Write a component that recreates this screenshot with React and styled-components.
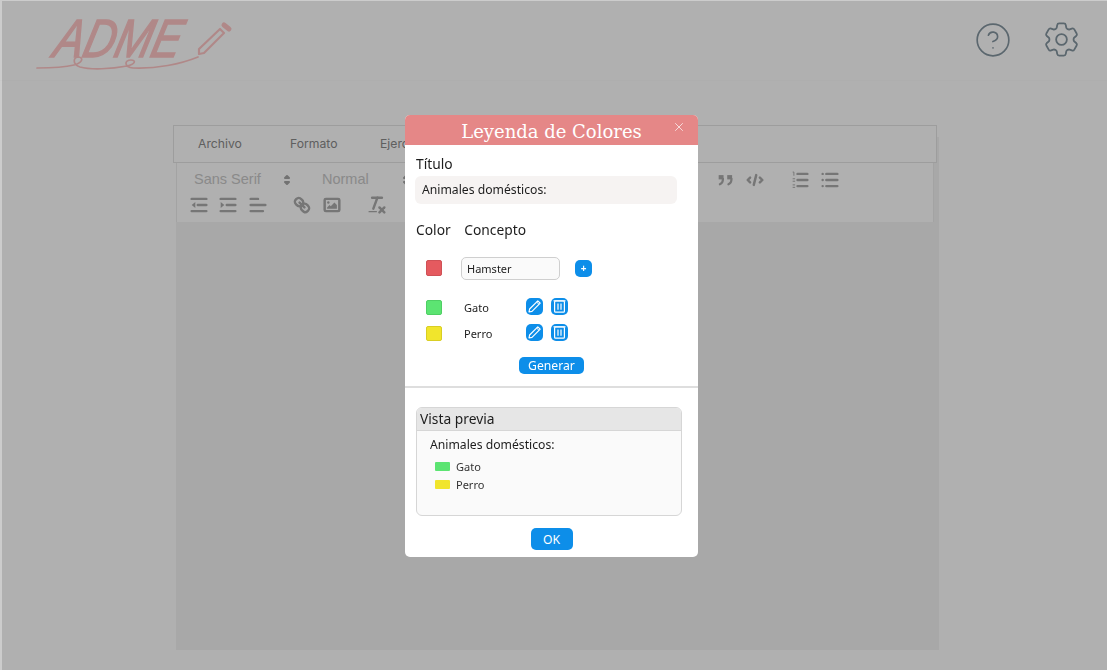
import styled, { createGlobalStyle } from "styled-components";
import { CircleHelp, X } from "lucide-react";
import { HiOutlineCog6Tooth } from "react-icons/hi2";

const legend = [
  { name: "Gato", color: "#5ce472", edge: "#4fcf64" },
  { name: "Perro", color: "#f1e52c", edge: "#d9ce24" },
];

const App = () => (
  <>
    <GlobalStyle />
    <Page>
      <Header>
        <Logo />
        <HeaderIcons>
          <CircleHelp size={38} strokeWidth={1.05} />
          <HiOutlineCog6Tooth size={43} strokeWidth={1} />
        </HeaderIcons>
      </Header>
      <EditorCard>
        <MenuBar>
          <span>Archivo</span>
          <span>Formato</span>
          <span>Ejercicios</span>
        </MenuBar>
        <Toolbar>
          <ToolRow>
            <Picker>
              Sans Serif
              <Arrows $left={90} />
            </Picker>
            <Picker>
              Normal
              <Arrows $left={81} />
            </Picker>
            <ToolGroup $offset={271}>
              <QuoteIcon />
              <CodeIcon />
            </ToolGroup>
            <ToolGroup $offset={23}>
              <OrderedIcon />
              <BulletIcon />
            </ToolGroup>
          </ToolRow>
          <ToolRow>
            <ToolGroup>
              <OutdentIcon />
              <IndentIcon />
              <AlignIcon />
            </ToolGroup>
            <ToolGroup $offset={22.5}>
              <LinkIcon />
              <ImageIcon />
            </ToolGroup>
            <ToolGroup $offset={23}>
              <CleanIcon />
            </ToolGroup>
          </ToolRow>
        </Toolbar>
      </EditorCard>
    </Page>

    <Backdrop>
      <Modal>
        <ModalHeader>
          Leyenda de Colores
          <CloseButton>
            <X size={14} strokeWidth={1.2} />
          </CloseButton>
        </ModalHeader>

        <FormSection>
          <Label>Título</Label>
          <TitleInput>Animales domésticos:</TitleInput>
          <ColumnLabels>
            <Label>Color</Label>
            <Label>Concepto</Label>
          </ColumnLabels>
          <NewRow>
            <Swatch $color="#e55a5f" $edge="#cf5156" />
            <ConceptInput>Hamster</ConceptInput>
            <PlusButton>+</PlusButton>
          </NewRow>
          {legend.map((item) => (
            <LegendRow key={item.name}>
              <Swatch $color={item.color} $edge={item.edge} />
              <ConceptName>{item.name}</ConceptName>
              <IconButton>
                <PencilIcon />
              </IconButton>
              <IconButton>
                <TrashIcon />
              </IconButton>
            </LegendRow>
          ))}
          <GenerateButton>Generar</GenerateButton>
        </FormSection>

        <Divider />

        <PreviewSection>
          <Preview>
            <PreviewTitle>Vista previa</PreviewTitle>
            <PreviewBody>
              <PreviewHeading>Animales domésticos:</PreviewHeading>
              {legend.map((item) => (
                <PreviewItem key={item.name}>
                  <PreviewColor $color={item.color} />
                  {item.name}
                </PreviewItem>
              ))}
            </PreviewBody>
          </Preview>
          <OkButton>OK</OkButton>
        </PreviewSection>
      </Modal>
    </Backdrop>
  </>
);

// Drawings
const Logo = () => (
  <LogoSvg viewBox="0 0 200 56" width="200" height="56">
    <text
      x="26"
      y="41"
      transform="skewX(-14)"
      fontFamily="'Liberation Sans', sans-serif"
      fontStyle="italic"
      fontSize="54"
      textLength="126"
      lengthAdjust="spacingAndGlyphs"
      fill="#ffc6c6"
      stroke="#ffc6c6"
      strokeWidth="1.5"
    >
      ADME
    </text>
    <path
      d="M1 52 C15 52 30 51 38 49 C46 47 48 42 43 41 C37 41 36 48 44 51 C55 54 75 53 91 50 C100 48 100 44 95 44 C88 44 88 51 97 52 C120 53 145 48 162 41"
      fill="none"
      stroke="#ffc6c6"
      strokeWidth="1.7"
      strokeLinecap="round"
    />
    <path
      d="M163 38 L163 33 L184 13 L188 17 L168 37 Z"
      fill="none"
      stroke="#ffc6c6"
      strokeWidth="2.2"
      strokeLinejoin="round"
    />
    <path d="M188 9 L193 13" stroke="#ffc6c6" strokeWidth="5" strokeLinecap="round" />
  </LogoSvg>
);

const QuillIcon = ({ children }) => (
  <QuillSvg viewBox="0 0 18 18" width="22" height="22">
    {children}
  </QuillSvg>
);

const Arrows = styled((props) => (
  <svg viewBox="0 0 18 18" width="18" height="18" {...props}>
    <polygon points="7 11 9 13 11 11 7 11" />
    <polygon points="7 7 9 5 11 7 7 7" />
  </svg>
))`
  position: absolute;
  top: 4px;
  left: ${(p) => p.$left}px;

  polygon {
    fill: #a6a6a6;
    stroke: #a6a6a6;
    stroke-width: 2;
    stroke-linejoin: round;
  }
`;

const QuoteIcon = () => (
  <QuillIcon>
    <rect className="fill" height="3.5" width="4" x="3" y="5" />
    <rect className="fill" height="3.5" width="4" x="10" y="5" />
    <path className="heavy" d="M6.5,8c0,3.5-2.5,4.5-2.5,4.5" />
    <path className="heavy" d="M13.5,8c0,3.5-2.5,4.5-2.5,4.5" />
  </QuillIcon>
);

const CodeIcon = () => (
  <QuillIcon>
    <polyline points="5 7 3 9 5 11" />
    <polyline points="13 7 15 9 13 11" />
    <line x1="10" x2="8" y1="5" y2="13" />
  </QuillIcon>
);

const OrderedIcon = () => (
  <QuillIcon>
    <line x1="7" x2="15" y1="4" y2="4" />
    <line x1="7" x2="15" y1="9" y2="9" />
    <line x1="7" x2="15" y1="14" y2="14" />
    <line className="thin" x1="3" x2="4" y1="2.5" y2="2.5" />
    <line className="thin" x1="4" x2="4" y1="2.5" y2="5.5" />
    <line className="thin" x1="3" x2="5" y1="8" y2="8" />
    <line className="thin" x1="3" x2="5" y1="10" y2="10" />
    <line className="thin" x1="3" x2="5" y1="13" y2="13" />
    <line className="thin" x1="3" x2="5" y1="15" y2="15" />
  </QuillIcon>
);

const BulletIcon = () => (
  <QuillIcon>
    <line x1="6" x2="15" y1="4" y2="4" />
    <line x1="6" x2="15" y1="9" y2="9" />
    <line x1="6" x2="15" y1="14" y2="14" />
    <line x1="3" x2="3" y1="4" y2="4" />
    <line x1="3" x2="3" y1="9" y2="9" />
    <line x1="3" x2="3" y1="14" y2="14" />
  </QuillIcon>
);

const OutdentIcon = () => (
  <QuillIcon>
    <line x1="3" x2="15" y1="14" y2="14" />
    <line x1="3" x2="15" y1="4" y2="4" />
    <line x1="8" x2="15" y1="9" y2="9" />
    <polyline className="fill" points="6 6.5 6 11.5 3 9 6 6.5" />
  </QuillIcon>
);

const IndentIcon = () => (
  <QuillIcon>
    <line x1="3" x2="15" y1="14" y2="14" />
    <line x1="3" x2="15" y1="4" y2="4" />
    <line x1="8" x2="15" y1="9" y2="9" />
    <polyline className="fill" points="3 6.5 3 11.5 6 9 3 6.5" />
  </QuillIcon>
);

const AlignIcon = () => (
  <QuillIcon>
    <line x1="3" x2="15" y1="9" y2="9" />
    <line x1="3" x2="13" y1="14" y2="14" />
    <line x1="3" x2="9" y1="4" y2="4" />
  </QuillIcon>
);

const LinkIcon = () => (
  <QuillIcon>
    <line x1="7" x2="11" y1="7" y2="11" />
    <path d="M8.9,4.577a3.476,3.476,0,0,1,.36,4.679A3.476,3.476,0,0,1,4.577,8.9C3.185,7.5,2.035,6.4,4.217,4.217S7.5,3.185,8.9,4.577Z" />
    <path d="M13.423,9.1a3.476,3.476,0,0,0-4.679-.36,3.476,3.476,0,0,0,.36,4.679c1.392,1.392,2.5,2.542,4.679.36S14.815,10.5,13.423,9.1Z" />
  </QuillIcon>
);

const ImageIcon = () => (
  <QuillIcon>
    <rect height="10" width="12" x="3" y="4" rx="1" ry="1" />
    <circle className="fill" cx="6" cy="7" r="1" />
    <polyline className="fill" points="5 12 5 11 7 9 8 10 11 7 13 9 13 12 5 12" />
  </QuillIcon>
);

const CleanIcon = () => (
  <QuillIcon>
    <line x1="5" x2="13" y1="3" y2="3" />
    <line x1="6" x2="9.35" y1="12" y2="3" />
    <line x1="11" x2="15" y1="11" y2="15" />
    <line x1="15" x2="11" y1="11" y2="15" />
    <rect className="fill" height="1" rx="0.5" ry="0.5" width="7" x="2" y="14" />
  </QuillIcon>
);

const PencilIcon = () => (
  <svg viewBox="0 0 17 17" width="17" height="17" fill="none" stroke="#fff">
    <path d="M3 14 L3.6 11 L11.8 2.8 L14.2 5.2 L6 13.4 Z" strokeWidth="1.2" strokeLinejoin="round" />
    <path d="M10.6 4 L13 6.4" strokeWidth="1" />
  </svg>
);

const TrashIcon = () => (
  <svg viewBox="0 0 17 17" width="17" height="17" fill="none" stroke="#fff" strokeWidth="1.2">
    <path d="M2.5 2.8 H14.5" />
    <rect x="3.6" y="3" width="9.8" height="11.2" rx="1" />
    <path d="M7 5.5 V11.7 M10 5.5 V11.7" />
  </svg>
);

// Styles
const GlobalStyle = createGlobalStyle`
  html, body {
    margin: 0;
    height: 100%;
    overflow: hidden;
    background: #fff;
  }
`;

const Page = styled.div`
  height: 670px;
  display: flex;
  flex-direction: column;
  background: #fff;
`;

const Header = styled.header`
  height: 81px;
  flex: none;
  box-sizing: border-box;
  border-bottom: 1px solid #fcfcfc;
  display: flex;
  justify-content: space-between;
  align-items: flex-start;
`;

const LogoSvg = styled.svg`
  margin: 16px 0 0 36px;
  overflow: visible;
`;

const HeaderIcons = styled.div`
  display: flex;
  align-items: center;
  gap: 27.5px;
  margin: 18px 24.5px 0 0;
  color: #8495a0;
`;

const EditorCard = styled.div`
  margin: 56px 0 0 176px;
  width: 763px;
  height: 513px;
  background: #f3f3f3;
`;

const MenuBar = styled.div`
  box-sizing: border-box;
  margin: -12px 0 0 -3px;
  width: 764px;
  height: 38px;
  padding: 0 0 2px 24px;
  display: grid;
  grid-template-columns: 92px 90px auto;
  align-items: center;
  background: #fff;
  border: 1px solid #e4e4e4;
  font: 12.2px Inter, sans-serif;
  color: #8a8a8a;
`;

const Toolbar = styled.div`
  box-sizing: border-box;
  width: 758px;
  height: 59px;
  padding: 4px 0 0 11px;
  background: #fff;
  border-left: 1px solid #ededed;
  border-right: 1px solid #ededed;
`;

const ToolRow = styled.div`
  height: 25px;
  display: flex;
  align-items: center;

  & + & {
    height: 26px;
  }
`;

const Picker = styled.div`
  position: relative;
  width: 128px;
  padding-left: 6px;
  box-sizing: border-box;
  font: 14.5px "Liberation Sans", Arial, sans-serif;
  color: #c8c8c8;
  line-height: 25px;
`;

const ToolGroup = styled.div`
  display: flex;
  gap: 7.4px;
  margin-left: ${(p) => p.$offset || 0}px;
`;

const QuillSvg = styled.svg`
  display: block;
  fill: none;
  stroke: #ababab;
  stroke-width: 2;
  stroke-linecap: round;
  stroke-linejoin: round;

  .fill {
    fill: #ababab;
    stroke: none;
  }

  .heavy {
    stroke-width: 1.8;
  }

  .thin {
    stroke-width: 0.8;
    stroke-linecap: butt;
  }
`;

const Backdrop = styled.div`
  position: fixed;
  inset: 0;
  box-sizing: border-box;
  padding: 114px 0 0 403px;
  background: rgba(0, 0, 0, 0.31);
  background-clip: padding-box;
  border-top: 1px solid rgba(0, 0, 0, 0.2);
  border-left: 2px solid rgba(0, 0, 0, 0.2);
  font-family: "Noto Sans", "Open Sans", sans-serif;
`;

const Modal = styled.div`
  width: 293px;
  height: 442px;
  background: #fff;
  border-radius: 5px;
  overflow: hidden;
  color: #1d1d1d;
`;

const ModalHeader = styled.div`
  position: relative;
  height: 30px;
  background: #e58787;
  color: #fff;
  text-align: center;
  font: 18px/33px "DejaVu Serif", serif;
`;

const CloseButton = styled.span`
  position: absolute;
  top: 5px;
  right: 12px;
  display: flex;
  color: #fff;
`;

const FormSection = styled.div`
  height: 241px;
  box-sizing: border-box;
  padding: 9px 0 0 10px;
  display: flex;
  flex-direction: column;
`;

const Label = styled.div`
  font-size: 13.8px;
  line-height: 20px;
  margin-left: 1px;
`;

const TitleInput = styled.div`
  width: 262px;
  height: 28px;
  margin-top: 2px;
  padding-left: 7px;
  box-sizing: border-box;
  background: #f6f3f2;
  border-radius: 6px;
  font-size: 12.2px;
  line-height: 28px;
`;

const ColumnLabels = styled.div`
  display: flex;
  gap: 12.5px;
  margin-top: 16px;
`;

const NewRow = styled.div`
  display: flex;
  align-items: center;
  margin: 16px 0 0 11px;
  height: 24px;
`;

const Swatch = styled.span`
  flex: none;
  width: 16px;
  height: 16px;
  box-sizing: border-box;
  background: ${(p) => p.$color};
  border: 1px solid ${(p) => p.$edge};
  border-radius: 2px;
`;

const ConceptInput = styled.div`
  width: 99px;
  height: 23px;
  margin-left: 19px;
  padding-left: 5px;
  box-sizing: border-box;
  background: #fafafa;
  border: 1px solid #cfcfcf;
  border-radius: 5px;
  font-size: 11px;
  line-height: 22px;
`;

const PlusButton = styled.span`
  width: 17px;
  height: 17px;
  margin-left: 15px;
  background: #0d8ee9;
  border-radius: 5px;
  color: #fff;
  font-size: 10px;
  font-weight: 700;
  line-height: 17px;
  text-align: center;
`;

const LegendRow = styled.div`
  display: flex;
  align-items: center;
  height: 17px;
  margin: 9px 0 0 11px;

  ${NewRow} + & {
    margin-top: 18px;
  }

  ${Swatch} {
    height: 15px;
    margin-top: 2px;
  }
`;

const ConceptName = styled.span`
  width: 62px;
  margin: 1px 0 0 22px;
  font-size: 11px;
`;

const IconButton = styled.span`
  width: 17px;
  height: 17px;
  margin-right: 8px;
  background: #0d8ee9;
  border-radius: 5px;

  svg {
    display: block;
  }
`;

const GenerateButton = styled.span`
  align-self: center;
  width: 65px;
  height: 17px;
  margin: 16px 0 0 -10px;
  background: #0d8ee9;
  border-radius: 5px;
  color: #fff;
  font-size: 12.2px;
  line-height: 18px;
  text-align: center;
`;

const Divider = styled.div`
  height: 2px;
  background: #dedede;
`;

const PreviewSection = styled.div`
  padding: 19px 0 0 11px;
  display: flex;
  flex-direction: column;
`;

const Preview = styled.div`
  width: 266px;
  height: 109px;
  box-sizing: border-box;
  border: 1px solid #d6d6d6;
  border-radius: 6px;
  background: #fafafa;
  overflow: hidden;
`;

const PreviewTitle = styled.div`
  height: 23px;
  padding-left: 3px;
  box-sizing: border-box;
  border-bottom: 1px solid #d6d6d6;
  background: #e6e6e6;
  font-size: 13.8px;
  line-height: 22px;
`;

const PreviewBody = styled.div`
  padding: 5px 0 0 13px;
`;

const PreviewHeading = styled.div`
  font-size: 12.2px;
  line-height: 18px;
  margin-bottom: 3px;
`;

const PreviewItem = styled.div`
  display: flex;
  align-items: center;
  gap: 6px;
  margin-left: 5px;
  height: 18px;
  font-size: 11px;
  color: #333;
`;

const PreviewColor = styled.span`
  width: 15px;
  height: 9px;
  background: ${(p) => p.$color};
  border-radius: 1px;
`;

const OkButton = styled.span`
  align-self: center;
  width: 42px;
  height: 22px;
  margin: 12px 0 0 -11px;
  background: #0d8ee9;
  border-radius: 5px;
  color: #fff;
  font-size: 12.2px;
  line-height: 23px;
  text-align: center;
`;

export default App;
